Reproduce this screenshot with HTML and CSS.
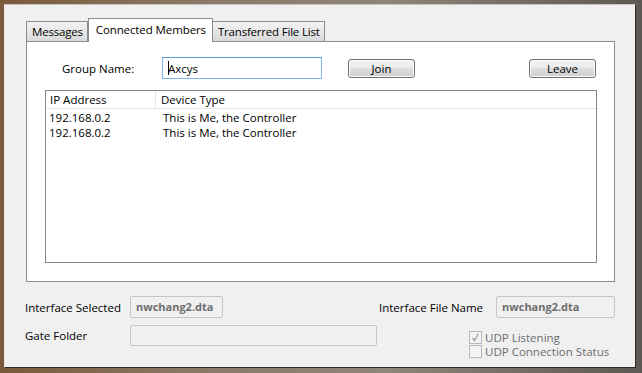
FILE: index.html
```html
<!DOCTYPE html>
<html lang="en">
<head>
    <meta charset="UTF-8">
    <title>Connected Members</title>
    <link rel="stylesheet" href="styles.css">
</head>
<body>

    <div class="window">
        <div class="tabs">
            <div class="tab">Messages</div>
            <div class="tab active">Connected Members</div>
            <div class="tab">Transferred File List</div>
        </div>

        <div class="panel">
            <div class="group-row">
                <span class="group-label">Group Name:</span>
                <div class="text-input focused"><span class="caret"></span>Axcys</div>
                <button class="btn join">Join</button>
                <button class="btn leave">Leave</button>
            </div>

            <div class="list">
                <div class="list-head">
                    <div class="col-ip">IP Address</div>
                    <div class="col-type">Device Type</div>
                </div>
                <div class="list-row">
                    <div class="col-ip">192.168.0.2</div>
                    <div class="col-type">This is Me, the Controller</div>
                </div>
                <div class="list-row">
                    <div class="col-ip">192.168.0.2</div>
                    <div class="col-type">This is Me, the Controller</div>
                </div>
            </div>
        </div>

        <div class="footer">
            <div class="footer-row">
                <span class="field-label">Interface Selected</span>
                <div class="text-input disabled small">nwchang2.dta</div>
                <span class="field-label file-label">Interface File Name</span>
                <div class="text-input disabled file">nwchang2.dta</div>
            </div>
            <div class="footer-row second">
                <span class="field-label">Gate Folder</span>
                <div class="text-input disabled wide"></div>
                <div class="checks">
                    <label class="check"><span class="box checked">
                        <svg width="11" height="11" viewBox="0 0 11 11"><path d="M2.5 6 L4.5 8.5 L8.5 1.5" fill="none" stroke="#a0a0a0" stroke-width="1.3"/></svg>
                    </span>UDP Listening</label>
                    <label class="check"><span class="box"></span>UDP Connection Status</label>
                </div>
            </div>
        </div>
    </div>

</body>
</html>
```

FILE: styles.css
```css
html, body {
    margin: 0;
    padding: 0;
    height: 373px;
    overflow: hidden;
}

body {
    font-family: 'Open Sans', 'Noto Sans', sans-serif;
    font-size: 11.5px;
    color: #000;
    background: linear-gradient(to right, #7b5a39 0%, #8a7866 30%, #8f8579 60%, #5d5853 100%);
    padding: 4px 5px 0 4px;
    box-sizing: border-box;
}

.window {
    width: 632px;
    height: 364px;
    box-sizing: border-box;
    background-color: #f0f0f0;
    border-top: 1px solid #c9c4bd;
    border-left: 1px solid #e8e4de;
    border-right: 1px solid #2a2a2a;
    border-bottom: 1px solid #2a2a2a;
    padding: 12px 0 0 21px;
}

.tabs {
    display: flex;
    align-items: flex-end;
    height: 24px;
    position: relative;
    z-index: 1;
}

.tab {
    height: 20px;
    line-height: 20px;
    padding: 0 4px 0 5px;
    border: 1px solid #898c95;
    border-bottom: none;
    background: linear-gradient(#f3f3f3, #e6e6e6 50%, #d9d9d9);
    box-sizing: border-box;
    letter-spacing: -0.2px;
}

.tab + .tab {
    border-left: none;
}

.tab.active {
    height: 24px;
    line-height: 21px;
    padding: 0 6px 0 7px;
    background: #fff;
    border-left: 1px solid #898c95;
    margin-bottom: -1px;
    letter-spacing: -0.1px;
}

.tab.active + .tab {
    border-left: none;
}

.panel {
    width: 589px;
    height: 241px;
    box-sizing: border-box;
    background: #fff;
    border: 1px solid #898c95;
    padding: 15px 0 0 18px;
}

.group-row {
    display: flex;
    align-items: center;
    height: 22px;
}

.group-label {
    margin-left: 17px;
    width: 100px;
}

.text-input {
    box-sizing: border-box;
    height: 22px;
    line-height: 19px;
    border: 1px solid #abadb3;
    padding: 0 5px;
    background: #fff;
    white-space: nowrap;
    overflow: hidden;
}

.text-input.focused {
    width: 160px;
    border-color: #7eb4ea;
    border-top-color: #5d9bd9;
    display: flex;
    align-items: center;
}

.caret {
    display: inline-block;
    width: 1px;
    height: 14px;
    background: #000;
    margin-right: -1px;
}

.btn {
    font-family: inherit;
    font-size: inherit;
    height: 19px;
    width: 67px;
    padding: 0;
    line-height: 15px;
    border: 1px solid #707070;
    border-radius: 3px;
    background: linear-gradient(#f2f2f2 0%, #ebebeb 45%, #dddddd 50%, #cfcfcf 100%);
    box-shadow: inset 0 0 0 1px #fcfcfc;
    color: #000;
}

.btn.join {
    margin-left: 26px;
}

.btn.leave {
    margin-left: 114px;
}

.list {
    margin-top: 11px;
    width: 552px;
    height: 173px;
    box-sizing: border-box;
    border: 1px solid #828790;
}

.list-head {
    display: flex;
    height: 18px;
    line-height: 17px;
    border-bottom: 1px solid #e5e5e5;
    box-sizing: border-box;
}

.list-head .col-ip {
    width: 105px;
    padding-left: 4px;
    border-right: 1px solid #e5e5e5;
}

.list-head .col-type {
    padding-left: 5px;
}

.list-row {
    display: flex;
    height: 15px;
    line-height: 15px;
}

.list-head + .list-row {
    margin-top: 1px;
}

.list-row .col-ip {
    width: 111px;
    padding-left: 3px;
}

.list-row .col-type {
    padding-left: 3px;
}

.footer {
    padding-top: 14px;
    margin-left: -1px;
}

.footer-row {
    display: flex;
    align-items: center;
    height: 22px;
}

.footer-row.second {
    margin-top: 7px;
    align-items: flex-start;
}

.field-label {
    width: 105px;
}

.footer-row.second .field-label {
    line-height: 22px;
}

.text-input.disabled {
    background: #f0f0f0;
    border-color: #c5c5c5;
    border-radius: 2px;
    color: #6d6d6d;
    font-weight: bold;
    font-size: 11px;
}

.text-input.small {
    width: 93px;
}

.file-label {
    width: auto;
    margin-left: 156px;
    margin-right: 13px;
}

.text-input.file {
    width: 119px;
}

.text-input.wide {
    width: 247px;
    height: 21px;
}

.checks {
    margin-left: 92px;
    margin-top: 5px;
    display: flex;
    flex-direction: column;
}

.check {
    display: flex;
    align-items: center;
    height: 14px;
    color: #6d6d6d;
}

.box {
    width: 13px;
    height: 13px;
    box-sizing: border-box;
    border: 1px solid #b8b8b8;
    background: #f4f4f4;
    margin-right: 3px;
    display: flex;
    align-items: center;
    justify-content: center;
}
```
